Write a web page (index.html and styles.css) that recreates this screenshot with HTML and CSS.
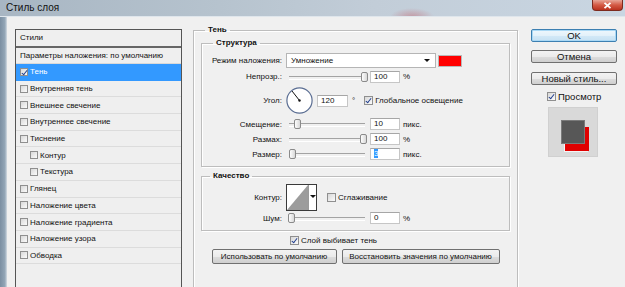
FILE: index.html
```html
<!DOCTYPE html>
<html>
  <head>
    <title>Стиль слоя</title>
    <link rel="stylesheet" href="styles.css">
  </head>
  <body>
    <div class="window">
      <div class="titlebar">
        <span class="title">Стиль слоя</span>
        <span class="close">
          <svg width="9" height="7" viewBox="0 0 9 7"><path d="M1.5 0.8 L7.5 6.2 M7.5 0.8 L1.5 6.2" stroke="#fff" stroke-width="1.8"/></svg>
        </span>
      </div>

      <div class="frame">
        <div class="frame-edge"></div>
        <div class="dialog">

          <div class="styles-list">
            <div class="list-head">Стили</div>
            <div class="list-blend">Параметры наложения: по умолчанию</div>
            <div class="list-item selected"><span class="cb on"></span>Тень</div>
            <div class="list-item"><span class="cb"></span>Внутренняя тень</div>
            <div class="list-item"><span class="cb"></span>Внешнее свечение</div>
            <div class="list-item"><span class="cb"></span>Внутреннее свечение</div>
            <div class="list-item"><span class="cb"></span>Тиснение</div>
            <div class="list-item sub"><span class="cb"></span>Контур</div>
            <div class="list-item sub"><span class="cb"></span>Текстура</div>
            <div class="list-item"><span class="cb"></span>Глянец</div>
            <div class="list-item"><span class="cb"></span>Наложение цвета</div>
            <div class="list-item"><span class="cb"></span>Наложение градиента</div>
            <div class="list-item"><span class="cb"></span>Наложение узора</div>
            <div class="list-item"><span class="cb"></span>Обводка</div>
          </div>

          <div class="main">
            <fieldset class="group outer">
              <legend>Тень</legend>

              <fieldset class="group structure">
                <legend>Структура</legend>

                <div class="row row-mode">
                  <label class="lbl">Режим наложения:</label>
                  <div class="select">Умножение<span class="arrow"></span></div>
                  <span class="swatch"></span>
                </div>

                <div class="row row-opacity">
                  <label class="lbl">Непрозр.:</label>
                  <div class="slider"><span class="thumb" style="left: 75px"></span></div>
                  <div class="field">100</div>
                  <span class="unit">%</span>
                </div>

                <div class="row row-angle">
                  <label class="lbl">Угол:</label>
                  <svg class="dial" width="27" height="27" viewBox="0 0 27 27">
                    <circle cx="13.5" cy="13.5" r="12.6" fill="#fff" stroke="#5b6e93" stroke-width="1.2"/>
                    <line x1="13.5" y1="13.5" x2="6" y2="4" stroke="#111" stroke-width="1"/>
                    <circle cx="13.5" cy="13.5" r="1.2" fill="#111"/>
                  </svg>
                  <div class="field wide">120</div>
                  <span class="deg">°</span>
                  <span class="cb on big"></span>
                  <span class="cb-text">Глобальное освещение</span>
                </div>

                <div class="row row-param">
                  <label class="lbl">Смещение:</label>
                  <div class="slider"><span class="thumb" style="left: 8px"></span></div>
                  <div class="field">10</div>
                  <span class="unit">пикс.</span>
                </div>

                <div class="row row-param">
                  <label class="lbl">Размах:</label>
                  <div class="slider"><span class="thumb" style="left: 74px"></span></div>
                  <div class="field">100</div>
                  <span class="unit">%</span>
                </div>

                <div class="row row-param">
                  <label class="lbl">Размер:</label>
                  <div class="slider"><span class="thumb" style="left: 3px"></span></div>
                  <div class="field"><span class="sel">3</span></div>
                  <span class="unit">пикс.</span>
                </div>
              </fieldset>

              <fieldset class="group quality">
                <legend>Качество</legend>

                <div class="row row-contour">
                  <label class="lbl">Контур:</label>
                  <div class="contour">
                    <svg class="contour-thumb" width="21" height="25" viewBox="0 0 21 25">
                      <rect width="21" height="25" fill="#fff"/>
                      <polygon points="0,25 21,0 21,25" fill="#9c9c9c"/>
                    </svg>
                    <span class="contour-drop"><span class="arrow"></span></span>
                  </div>
                  <span class="cb big aa"></span>
                  <span class="cb-text">Сглаживание</span>
                </div>

                <div class="row row-param">
                  <label class="lbl">Шум:</label>
                  <div class="slider"><span class="thumb" style="left: 2px"></span></div>
                  <div class="field">0</div>
                  <span class="unit">%</span>
                </div>
              </fieldset>

              <div class="knockout">
                <span class="cb on big"></span>
                <span class="cb-text">Слой выбивает тень</span>
              </div>

              <div class="defaults">
                <div class="btn small">Использовать по умолчанию</div>
                <div class="btn small">Восстановить значения по умолчанию</div>
              </div>
            </fieldset>
          </div>

          <div class="side">
            <div class="btn default">OK</div>
            <div class="btn cancel">Отмена</div>
            <div class="btn new-style">Новый стиль...</div>
            <div class="preview-check">
              <span class="cb on big"></span>
              <span>Просмотр</span>
            </div>
            <div class="preview">
              <span class="preview-shadow"></span>
              <span class="preview-layer"></span>
            </div>
          </div>

        </div>
      </div>
    </div>
  </body>
</html>
```

FILE: styles.css
```css
* {
  box-sizing: border-box;
}

body {
  margin: 0;
  font-family: "Liberation Sans", Arial, sans-serif;
  font-size: 8px;
  color: #111;
  background: #f0f0f0;
}

.window {
  width: 625px;
  height: 287px;
  overflow: hidden;
  display: flex;
  flex-direction: column;
}

/* title bar */
.titlebar {
  height: 17px;
  flex: none;
  display: flex;
  align-items: flex-start;
  background:
    radial-gradient(ellipse 22px 9px at 412px 17px, rgba(196, 110, 120, 0.55), transparent),
    linear-gradient(to right, #a8b6c3 0%, #b6c3ce 35%, #c2cdd8 60%, #c9d6e2 100%);
  border-bottom: 1px solid #dfe6ec;
}

.title {
  font-size: 10px;
  line-height: 16px;
  padding-left: 6px;
  color: #111;
}

.close {
  margin-left: auto;
  margin-right: 2px;
  width: 31px;
  height: 11px;
  border: 1px solid #7d2a1e;
  border-top: none;
  border-radius: 0 0 4px 4px;
  background: linear-gradient(#e7a597, #d45a45 50%, #b9321f);
  display: flex;
  align-items: center;
  justify-content: center;
}

/* frame */
.frame {
  flex: 1;
  display: flex;
}

.frame-edge {
  width: 7px;
  flex: none;
  background: linear-gradient(to right, #7b8fa2, #93a6b7 70%, #d4dce3);
}

.dialog {
  flex: 1;
  display: flex;
  align-items: flex-start;
  padding: 8px 0 0 8px;
}

/* checkboxes */
.cb {
  width: 8px;
  height: 8px;
  flex: none;
  position: relative;
  border: 1px solid #8f8f8f;
  background: linear-gradient(135deg, #d8d8d8, #fbfbfb);
}

.cb.big {
  width: 9px;
  height: 9px;
}

.cb.on::after {
  content: '';
  position: absolute;
  left: 2px;
  top: 0;
  width: 2px;
  height: 5px;
  border: solid #1f3d8f;
  border-width: 0 1.5px 1.5px 0;
  transform: rotate(38deg);
}

.cb-text {
  margin-left: 2px;
}

/* styles list */
.styles-list {
  width: 167px;
  height: 270px;
  margin-top: 4px;
  flex: none;
  border: 1px solid #555;
  background: #efefef;
}

.list-head {
  height: 18px;
  line-height: 16px;
  padding-left: 4px;
  border-bottom: 2px solid #666;
}

.list-blend {
  height: 16px;
  line-height: 15px;
  padding-left: 4px;
  border-bottom: 1px solid #d9d9d9;
}

.list-item {
  height: 16.7px;
  display: flex;
  align-items: center;
  gap: 2px;
  padding-left: 4px;
  border-bottom: 1px solid #dcdcdc;
}

.list-item.sub {
  padding-left: 14px;
}

.list-item.selected {
  background: #3399ff;
  color: #fff;
  border-bottom-color: #3399ff;
}

/* main panel */
.main {
  width: 325px;
  margin-left: 11px;
  flex: none;
}

.group {
  margin: 0;
  min-width: 0;
  border: 1px solid #bdbdbd;
  box-shadow: inset 1px 1px 0 #fff, 1px 1px 0 #fff;
}

.group legend {
  font-weight: bold;
  line-height: 10px;
  padding: 0 3px;
}

.outer {
  height: 300px;
  padding: 3px 7px 0;
}

.outer > legend {
  margin-left: 4px;
}

.structure {
  padding: 5px 0 6px;
}

.structure > legend {
  margin-left: 11px;
}

.quality {
  margin-top: 4px;
  padding: 3px 0 6px;
}

.quality > legend {
  margin-left: 8px;
}

.row {
  display: flex;
  align-items: center;
}

.lbl {
  width: 80px;
  flex: none;
  text-align: right;
  margin-right: 4px;
}

.row-mode {
  height: 15px;
}

.row-opacity {
  height: 13px;
  margin-top: 2px;
}

.row-angle {
  height: 27px;
  margin-top: 4px;
}

.row-param {
  height: 12px;
  margin-top: 3px;
}

.row-angle + .row-param {
  margin-top: 4px;
}

.row-contour {
  height: 27px;
}

.row-contour + .row-param {
  margin-top: 1px;
}

.select {
  width: 150px;
  height: 15px;
  display: flex;
  align-items: center;
  padding-left: 4px;
  border: 1px solid #b5b5b5;
  background: #fff;
}

.arrow {
  width: 0;
  height: 0;
  border-left: 3px solid transparent;
  border-right: 3px solid transparent;
  border-top: 3px solid #111;
}

.select .arrow {
  margin-left: auto;
  margin-right: 5px;
}

.swatch {
  width: 24px;
  height: 12px;
  margin-left: 2px;
  background: #ff0000;
  border: 1px solid #b8b8b8;
}

.slider {
  width: 80px;
  height: 12px;
  flex: none;
  position: relative;
}

.slider::before {
  content: '';
  position: absolute;
  left: 3px;
  right: 1px;
  top: 5px;
  height: 2px;
  border-top: 1px solid #a3a3a3;
  border-bottom: 1px solid #fff;
}

.thumb {
  position: absolute;
  top: 1px;
  width: 7px;
  height: 10px;
  border: 1px solid #8a8a8a;
  border-radius: 2px;
  background: linear-gradient(to right, #fdfdfd, #d8d8d8);
}

.field {
  width: 30px;
  height: 12px;
  flex: none;
  margin-left: 4px;
  padding-left: 3px;
  line-height: 10px;
  border: 1px solid #c6c6c6;
  border-top-color: #a6a6a6;
  background: #fff;
}

.field.wide {
  width: 31px;
}

.field .sel {
  background: #3399ff;
  color: #fff;
}

.unit {
  margin-left: 3px;
}

.dial {
  flex: none;
}

.deg {
  margin-left: 4px;
  margin-right: 9px;
}

.contour {
  width: 31px;
  height: 27px;
  flex: none;
  display: flex;
  border: 1px solid #3a3a3a;
  background: #fff;
}

.contour-thumb {
  display: block;
}

.contour-drop {
  flex: 1;
  display: flex;
  justify-content: center;
  padding-top: 10px;
  border-left: 1px solid #9a9a9a;
}

.cb.aa {
  margin-left: 10px;
}

.knockout {
  display: flex;
  align-items: center;
  height: 9px;
  margin-top: 5px;
  padding-left: 89px;
}

.defaults {
  display: flex;
  justify-content: center;
  gap: 5px;
  margin-top: 4px;
}

/* buttons */
.btn {
  border: 1px solid #707070;
  border-radius: 2px;
  background: linear-gradient(#f3f3f3 0%, #ebebeb 50%, #dddddd 51%, #cfcfcf 100%);
  text-align: center;
}

.btn.small {
  height: 15px;
  line-height: 13px;
}

.defaults .btn:first-child {
  width: 125px;
}

.defaults .btn:last-child {
  width: 158px;
}

/* right column */
.side {
  width: 86px;
  margin-left: 13px;
  flex: none;
  display: flex;
  flex-direction: column;
  padding-top: 4px;
}

.side .btn {
  height: 13px;
  font-size: 9.5px;
  line-height: 11px;
}

.side .btn.default {
  border-color: #3c7fb1;
  background: linear-gradient(#eef7fd 0%, #e3f1fa 50%, #d3e9f7 51%, #c6e1f3 100%);
  box-shadow: inset 0 0 0 1px #a9d8f5;
}

.cancel {
  margin-top: 8px;
}

.new-style {
  margin-top: 9px;
}

.preview-check {
  display: flex;
  align-items: center;
  gap: 2px;
  height: 9px;
  margin-top: 7px;
  padding-left: 16px;
  font-size: 9.5px;
}

.preview {
  width: 50px;
  height: 50px;
  margin: 6px 0 0 17px;
  position: relative;
  background: #d9d9d9;
  border: 1px solid #d0d0d0;
}

.preview-shadow {
  position: absolute;
  left: 16px;
  top: 19px;
  width: 24px;
  height: 24px;
  background: #e00000;
  box-shadow: -1px 1px 0 #f4f4f4;
}

.preview-layer {
  position: absolute;
  left: 12px;
  top: 12px;
  width: 24px;
  height: 24px;
  background: #575757;
  border: 1px solid #7a7a7a;
}
```
